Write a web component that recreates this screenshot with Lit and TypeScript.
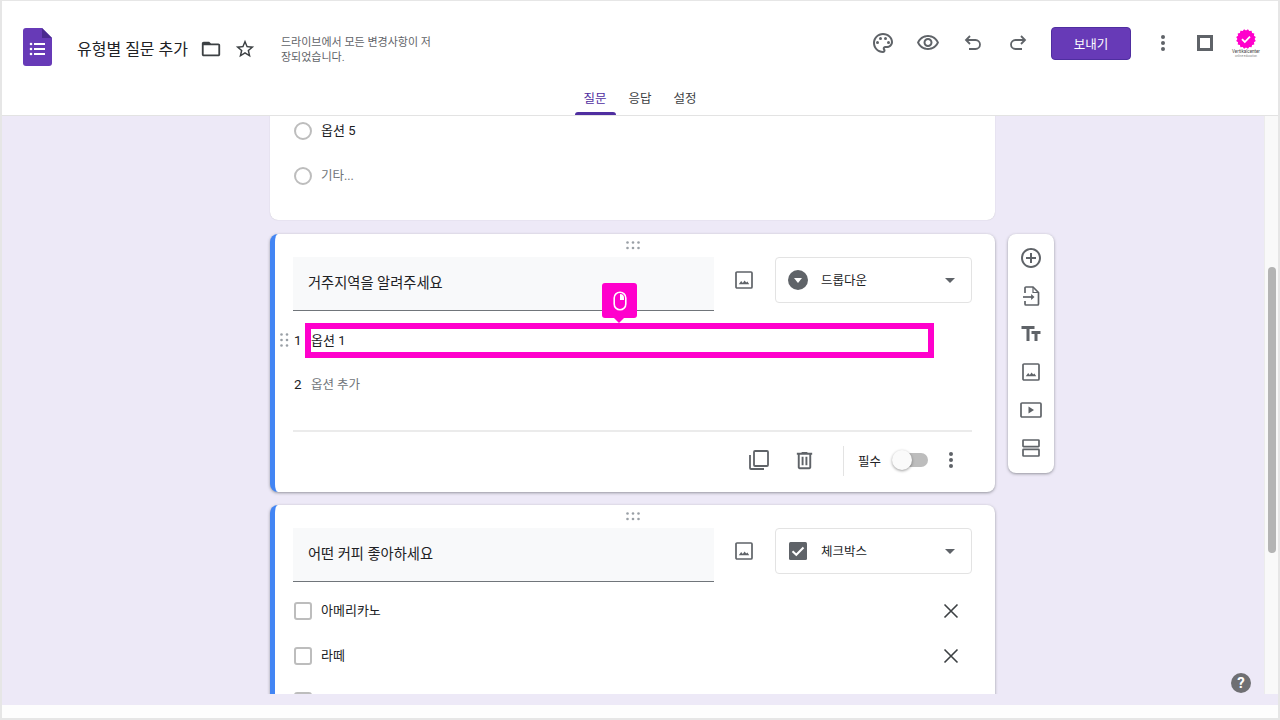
import { html, svg, css, LitElement } from "lit";
import { customElement } from "lit/decorators.js";

const GREY = "#5f6368";

const glyph = (d: string, size = 24, color = GREY) => html`
  <svg width=${size} height=${size} viewBox="0 0 24 24" fill=${color}><path d=${d}></path></svg>
`;

const P = {
  folder: "M20 6h-8l-2-2H4c-1.1 0-1.99.9-1.99 2L2 18c0 1.1.9 2 2 2h16c1.1 0 2-.9 2-2V8c0-1.1-.9-2-2-2zm0 12H4V8h16v10z",
  star: "M22 9.24l-7.19-.62L12 2 9.19 8.63 2 9.24l5.46 4.73L5.82 21 12 17.27 18.18 21l-1.63-7.03L22 9.24zM12 15.4l-3.76 2.27 1-4.28-3.32-2.88 4.38-.38L12 6.1l1.71 4.04 4.38.38-3.32 2.88 1 4.28L12 15.4z",
  eye: "M12 6c3.79 0 7.17 2.13 8.82 5.5C19.17 14.87 15.79 17 12 17s-7.17-2.13-8.82-5.5C4.83 8.13 8.21 6 12 6m0-2C7 4 2.73 7.11 1 11.5 2.73 15.89 7 19 12 19s9.27-3.11 11-7.5C21.27 7.11 17 4 12 4zm0 5c1.38 0 2.5 1.12 2.5 2.5S13.38 14 12 14s-2.5-1.12-2.5-2.5S10.62 9 12 9m0-2c-2.48 0-4.5 2.02-4.5 4.5S9.52 16 12 16s4.5-2.02 4.5-4.5S14.48 7 12 7z",
  add: "M13 7h-2v4H7v2h4v4h2v-4h4v-2h-4V7zm-1-5C6.48 2 2 6.48 2 12s4.48 10 10 10 10-4.48 10-10S17.52 2 12 2zm0 18c-4.41 0-8-3.59-8-8s3.59-8 8-8 8 3.59 8 8-3.59 8-8 8z",
  title: "M2.5 4v3h5v12h3V7h5V4h-13zm19 5h-9v3h3v7h3v-7h3V9z",
  trash: "M15 4V3H9v1H4v2h1v13c0 1.1.9 2 2 2h10c1.1 0 2-.9 2-2V6h1V4h-5zm2 15H7V6h10v13zM9 8h2v9H9zm4 0h2v9h-2z",
};

const palette = html`
  <svg width="24" height="24" viewBox="0 0 24 24" fill=${GREY}>
    <path d="M12 22C6.49 22 2 17.51 2 12S6.49 2 12 2s10 4.04 10 9c0 3.31-2.69 6-6 6h-1.77c-.28 0-.5.22-.5.5 0 .12.05.23.13.33.41.47.64 1.06.64 1.67 0 1.38-1.12 2.5-2.5 2.5zm0-18c-4.41 0-8 3.59-8 8s3.59 8 8 8c.28 0 .5-.22.5-.5 0-.16-.08-.28-.14-.35-.41-.46-.63-1.05-.63-1.65 0-1.38 1.12-2.5 2.5-2.5H16c2.21 0 4-1.79 4-4 0-3.86-3.59-7-8-7z"></path>
    <circle cx="6.5" cy="11.5" r="1.5"></circle>
    <circle cx="9.5" cy="7.5" r="1.5"></circle>
    <circle cx="14.5" cy="7.5" r="1.5"></circle>
    <circle cx="17.5" cy="11.5" r="1.5"></circle>
  </svg>
`;

const undo = html`
  <svg width="24" height="24" viewBox="0 0 24 24" fill="none" stroke=${GREY} stroke-width="1.8">
    <path d="M9 5L5 9l4 4"></path>
    <path d="M5 9h9.5a4.5 4.5 0 0 1 0 9H8"></path>
  </svg>
`;

const redo = html`
  <svg width="24" height="24" viewBox="0 0 24 24" fill="none" stroke=${GREY} stroke-width="1.8">
    <path d="M15 5l4 4-4 4"></path>
    <path d="M19 9H9.5a4.5 4.5 0 0 0 0 9H16"></path>
  </svg>
`;

const kebab = html`
  <svg width="24" height="24" viewBox="0 0 24 24" fill=${GREY}>
    <circle cx="12" cy="6" r="2"></circle>
    <circle cx="12" cy="12" r="2"></circle>
    <circle cx="12" cy="18" r="2"></circle>
  </svg>
`;

const picture = html`
  <svg width="18" height="18" viewBox="0 0 18 18" fill="none">
    <rect x="1" y="1" width="16" height="16" rx="1" stroke=${GREY} stroke-width="1.7"></rect>
    <path d="M3.8 13.2l2.4-3.2 1.6 2 1.8-2.6 1.6 2.2 1.2-1.2 1.8 2.8z" fill=${GREY}></path>
  </svg>
`;

const importFile = html`
  <svg width="22" height="22" viewBox="0 0 22 22" fill="none" stroke=${GREY} stroke-width="1.7">
    <path d="M5 8V3a1 1 0 0 1 1-1h7l5.5 5.5V19a1 1 0 0 1-1 1H6a1 1 0 0 1-1-1v-3"></path>
    <path d="M13 2v5.5h5.5" stroke-width="1.2"></path>
    <path d="M3 12h10"></path>
    <path d="M14.5 12l-3.4-2.9v5.8z" fill=${GREY} stroke="none"></path>
  </svg>
`;

const video = html`
  <svg width="22" height="16" viewBox="0 0 22 16" fill="none">
    <rect x="1" y="1" width="20" height="14" rx="1" stroke=${GREY} stroke-width="1.7"></rect>
    <path d="M8.5 4.5v7l5.5-3.5z" fill=${GREY}></path>
  </svg>
`;

const section = html`
  <svg width="20" height="20" viewBox="0 0 20 20" fill="none" stroke=${GREY} stroke-width="1.7">
    <rect x="2" y="2" width="16" height="6.6" rx=".6"></rect>
    <rect x="2" y="11.4" width="16" height="6.6" rx=".6"></rect>
  </svg>
`;

const copy = html`
  <svg width="22" height="22" viewBox="0 0 22 22" fill="none" stroke=${GREY} stroke-width="1.8">
    <rect x="6" y="2" width="14" height="15" rx="1"></rect>
    <path d="M2 6v13a1 1 0 0 0 1 1h13"></path>
  </svg>
`;

const cross = html`
  <svg width="18" height="18" viewBox="0 0 18 18" fill="none" stroke="#3c4043" stroke-width="1.6">
    <path d="M2.5 2.5l13 13M15.5 2.5l-13 13"></path>
  </svg>
`;

const dotGrid = (cols: number, rows: number) => {
  const dots = [];
  for (let y = 0; y < rows; y++) {
    for (let x = 0; x < cols; x++) {
      dots.push(svg`<circle cx=${1.5 + x * 5.5} cy=${1.5 + y * 5.5} r="1.3"></circle>`);
    }
  }
  return html`
    <svg width=${3 + (cols - 1) * 5.5} height=${3 + (rows - 1) * 5.5} fill="#9aa0a6">${dots}</svg>
  `;
};

const badgePoints = () => {
  const pts: string[] = [];
  for (let i = 0; i < 32; i++) {
    const r = i % 2 ? 10 : 8.6;
    const a = (i / 32) * Math.PI * 2;
    pts.push(`${10 + r * Math.cos(a)},${10 + r * Math.sin(a)}`);
  }
  return pts.join(" ");
};

@customElement("app-root")
export class AppRoot extends LitElement {
  static styles = css`
    :host {
      display: block;
      font-family: Roboto, "Noto Sans CJK KR", sans-serif;
      color: #202124;
    }
    svg {
      display: block;
    }
    .frame {
      box-sizing: border-box;
      height: 720px;
      display: flex;
      flex-flow: column;
      border: solid #e6e6e6;
      border-width: 1px 2px 2px 2px;
      background: #fff;
    }

    .header {
      flex: none;
      height: 115px;
      box-sizing: border-box;
      border-bottom: 1px solid #e3e3e3;
    }
    .top {
      height: 84px;
      display: flex;
      align-items: center;
    }
    .left {
      display: flex;
      align-items: center;
      padding: 8px 0 0 21px;
    }
    .doc-name {
      font-size: 16px;
      margin: 2px 12px 0 25px;
      white-space: nowrap;
    }
    .left .folder {
      margin-top: 4px;
    }
    .left .star {
      margin: 4px 0 0 12px;
    }
    .saved {
      width: 155px;
      margin-left: 25px;
      padding-top: 6px;
      font-size: 11px;
      line-height: 15px;
      color: #5f6368;
      word-break: break-all;
    }
    .right {
      margin-left: auto;
      padding-right: 11px;
      display: flex;
      align-items: center;
    }
    .act {
      width: 45px;
      display: flex;
      justify-content: center;
    }
    .send {
      box-sizing: border-box;
      width: 80px;
      height: 33px;
      margin: 0 9px 0 11px;
      border: 1px solid #4f2ea0;
      border-radius: 4px;
      background: #673ab7;
      color: #fff;
      font: inherit;
      font-size: 12.5px;
    }
    .square {
      width: 40px;
      display: flex;
      justify-content: center;
    }
    .square i {
      display: block;
      box-sizing: border-box;
      width: 16px;
      height: 16px;
      border: 3px solid #5f6368;
    }
    .avatar {
      width: 42px;
      display: flex;
      flex-flow: column;
      align-items: center;
      padding-top: 1px;
    }
    .avatar b {
      font-weight: 400;
      font-size: 4.5px;
      line-height: 5px;
      color: #444;
      white-space: nowrap;
    }
    .avatar small {
      font-size: 3px;
      line-height: 4px;
      color: #888;
      white-space: nowrap;
    }

    .tabs {
      height: 30px;
      display: flex;
      justify-content: center;
      gap: 4px;
    }
    .tab {
      width: 41px;
      padding-top: 2px;
      box-sizing: border-box;
      display: flex;
      flex-flow: column;
      align-items: center;
      justify-content: space-between;
      font-size: 12.5px;
      line-height: 24px;
      color: #3c4043;
    }
    .tab.on {
      color: #4f2ea0;
    }
    .tab u {
      display: block;
      width: 100%;
      height: 3px;
      border-radius: 3px 3px 0 0;
    }
    .tab.on u {
      background: #4f2ea0;
    }

    .main {
      flex: 1;
      min-height: 0;
      display: flex;
    }
    .content {
      flex: 1;
      min-width: 0;
      position: relative;
      overflow: hidden;
      background: #ede9f7;
      padding-left: 268px;
      display: grid;
      grid-template-columns: 725px 46px;
      column-gap: 13px;
      align-items: start;
    }
    .track {
      flex: none;
      width: 14px;
      box-sizing: border-box;
      border-left: 1px solid #ececec;
      background: #f9f9f9;
      padding: 151px 2px 0 3px;
    }
    .thumb {
      height: 286px;
      border-radius: 4px;
      background: #b4b4b4;
    }
    .band {
      flex: none;
      height: 11px;
      background: #ede9f7;
    }
    .foot {
      flex: none;
      height: 13px;
      background: #fdfdfd;
    }

    .cards {
      display: flex;
      flex-flow: column;
      margin-top: -8px;
    }
    .card {
      position: relative;
      flex: none;
      box-sizing: border-box;
      background: #fff;
      border-radius: 8px;
      box-shadow: 0 0 1px rgba(0, 0, 0, 0.25);
    }
    .card.plain {
      height: 112px;
      padding: 0 24px;
    }
    .card.active {
      border-left: 5px solid #4285f4;
      box-shadow: 0 1px 3px rgba(60, 64, 67, 0.5);
      padding: 0 23px 0 18px;
    }
    .card.second {
      height: 258px;
      margin-top: 14px;
    }
    .card.third {
      margin-top: 13px;
      height: 300px;
    }
    .handle {
      height: 23px;
      display: flex;
      align-items: center;
      justify-content: center;
    }
    .head {
      display: flex;
      align-items: flex-start;
    }
    .question {
      box-sizing: border-box;
      width: 421px;
      height: 54px;
      padding: 0 0 5px 15px;
      display: flex;
      align-items: center;
      background: #f8f9fa;
      border-bottom: 1px solid #70757a;
      font-size: 14.25px;
    }
    .pic {
      box-sizing: border-box;
      width: 61px;
      height: 46px;
      padding-right: 2px;
      display: flex;
      align-items: center;
      justify-content: center;
    }
    .select {
      box-sizing: border-box;
      width: 197px;
      height: 46px;
      padding: 0 16px 0 12px;
      display: flex;
      align-items: center;
      border: 1px solid #e3e3e3;
      border-radius: 4px;
      font-size: 12.5px;
    }
    .select span {
      flex: 1;
      margin-left: 13px;
      padding-bottom: 2px;
    }
    .caret {
      width: 0;
      height: 0;
      border: 5px solid transparent;
      border-top-color: #5f6368;
      border-bottom-width: 0;
    }
    .round-select {
      width: 20px;
      height: 20px;
      border-radius: 50%;
      background: #5f6368;
      display: flex;
      align-items: center;
      justify-content: center;
    }
    .round-select i {
      width: 0;
      height: 0;
      border: 4.5px solid transparent;
      border-top: 5px solid #fff;
      border-bottom-width: 0;
    }

    .option {
      height: 45px;
      display: flex;
      align-items: center;
      font-size: 13px;
    }
    .lbl {
      padding-bottom: 2px;
    }
    .mark {
      flex: none;
      box-sizing: border-box;
      width: 18px;
      height: 18px;
      margin-right: 9px;
      border: 2px solid #bdbdbd;
    }
    .mark.radio {
      border-radius: 50%;
    }
    .mark.box {
      border-radius: 3px;
    }
    .muted {
      color: #70757a;
      font-size: 12.5px;
    }
    .option .remove {
      margin-left: auto;
      width: 42px;
      display: flex;
      justify-content: center;
    }
    .choices {
      padding: 6px 0 0 1px;
    }

    .numbered {
      height: 44px;
      margin-left: -14px;
      display: flex;
      align-items: center;
      font-size: 13px;
    }
    .numbered .grip {
      box-sizing: border-box;
      width: 14px;
      padding-left: 1px;
    }
    .numbered .num {
      width: 18px;
      padding-left: 1px;
      box-sizing: border-box;
      font-size: 13.5px;
    }
    .list {
      padding-top: 7px;
    }
    .rule {
      height: 2px;
      margin-top: 24px;
      background: #ebebeb;
    }
    .tools {
      height: 56px;
      display: flex;
      align-items: center;
      justify-content: flex-end;
    }
    .tool {
      width: 46px;
      display: flex;
      justify-content: center;
    }
    .sep {
      width: 1px;
      height: 30px;
      margin: 2px 14px 0 15px;
      background: #e3e3e3;
    }
    .required {
      font-size: 12.5px;
      margin-right: 11px;
    }
    .switch {
      position: relative;
      width: 36px;
      height: 14px;
      display: flex;
      justify-content: flex-end;
    }
    .switch::before {
      content: "";
      width: 28px;
      border-radius: 7px;
      background: #bdbdbd;
    }
    .switch i {
      position: absolute;
      left: 0;
      top: -3px;
      width: 20px;
      height: 20px;
      border-radius: 50%;
      background: #fafafa;
      box-shadow: 0 1px 3px rgba(0, 0, 0, 0.4);
    }
    .more {
      width: 42px;
      margin-left: 2px;
      display: flex;
      justify-content: center;
    }

    .highlight {
      position: absolute;
      left: 30px;
      top: 89px;
      box-sizing: border-box;
      width: 629px;
      height: 35px;
      border: 6px solid #ff00cc;
    }
    .pointer {
      position: absolute;
      left: 327px;
      top: 49px;
      width: 35px;
      height: 35px;
      border-radius: 3px;
      background: #ff00cc;
      display: flex;
      align-items: center;
      justify-content: center;
    }
    .pointer::after {
      content: "";
      position: absolute;
      left: 12px;
      bottom: -5px;
      border: 5px solid transparent;
      border-top-color: #ff00cc;
      border-bottom-width: 0;
    }

    .toolbar {
      margin-top: 118px;
      box-sizing: border-box;
      height: 239px;
      padding: 5px 0 6px;
      background: #fff;
      border-radius: 8px;
      box-shadow: 0 1px 3px rgba(60, 64, 67, 0.5);
      display: flex;
      flex-flow: column;
    }
    .toolbar div {
      height: 38px;
      display: flex;
      align-items: center;
      justify-content: center;
    }

    .help {
      position: absolute;
      right: 13px;
      bottom: 1px;
      width: 20px;
      height: 20px;
      border-radius: 50%;
      background: #6f6f73;
      color: #fff;
      font-size: 15px;
      font-weight: 700;
      line-height: 20px;
      text-align: center;
    }
  `;

  render() {
    return html`
      <div class="frame">
        <header class="header">
          <div class="top">
            <div class="left">
              <svg width="29" height="38" viewBox="0 0 29 38">
                <path d="M3 0h16l10 10v25a3 3 0 0 1-3 3H3a3 3 0 0 1-3-3V3a3 3 0 0 1 3-3z" fill="#673ab7"></path>
                <path d="M19 0l10 10H19z" fill="#4a2a8f"></path>
                <g fill="#fff">
                  <circle cx="8" cy="16" r="1.3"></circle>
                  <circle cx="8" cy="21" r="1.3"></circle>
                  <circle cx="8" cy="26" r="1.3"></circle>
                  <rect x="11" y="15" width="11" height="2"></rect>
                  <rect x="11" y="20" width="11" height="2"></rect>
                  <rect x="11" y="25" width="11" height="2"></rect>
                </g>
              </svg>
              <div class="doc-name">유형별 질문 추가</div>
              <div class="folder">${glyph(P.folder, 22, "#3c4043")}</div>
              <div class="star">${glyph(P.star, 22, "#3c4043")}</div>
              <div class="saved">드라이브에서 모든 변경사항이 저장되었습니다.</div>
            </div>
            <div class="right">
              <div class="act">${palette}</div>
              <div class="act">${glyph(P.eye)}</div>
              <div class="act">${undo}</div>
              <div class="act">${redo}</div>
              <button class="send">보내기</button>
              <div class="act">${kebab}</div>
              <div class="square"><i></i></div>
              <div class="avatar">
                <svg width="20" height="20" viewBox="0 0 20 20">
                  <polygon points=${badgePoints()} fill="#ff00cc"></polygon>
                  <path d="M6 10.2l2.8 2.8L14 7.6" fill="none" stroke="#fff" stroke-width="1.8"></path>
                </svg>
                <b>Vertikalcenter</b>
                <small>online education</small>
              </div>
            </div>
          </div>
          <nav class="tabs">
            <div class="tab on">질문<u></u></div>
            <div class="tab">응답<u></u></div>
            <div class="tab">설정<u></u></div>
          </nav>
        </header>

        <div class="main">
          <div class="content">
            <div class="cards">
              <section class="card plain">
                <div class="option"><span class="mark radio"></span><span class="lbl">옵션 5</span></div>
                <div class="option muted"><span class="mark radio"></span><span class="lbl">기타...</span></div>
              </section>

              <section class="card active second">
                <div class="handle">${dotGrid(3, 2)}</div>
                <div class="head">
                  <div class="question">거주지역을 알려주세요</div>
                  <div class="pic">${picture}</div>
                  <div class="select">
                    <div class="round-select"><i></i></div>
                    <span>드롭다운</span>
                    <div class="caret"></div>
                  </div>
                </div>
                <div class="list">
                  <div class="numbered">
                    <div class="grip">${dotGrid(2, 3)}</div>
                    <div class="num">1</div>
                    <div class="lbl">옵션 1</div>
                  </div>
                  <div class="numbered">
                    <div class="grip"></div>
                    <div class="num">2</div>
                    <div class="lbl muted">옵션 추가</div>
                  </div>
                </div>
                <div class="rule"></div>
                <div class="tools">
                  <div class="tool">${copy}</div>
                  <div class="tool">${glyph(P.trash, 23)}</div>
                  <div class="sep"></div>
                  <div class="required">필수</div>
                  <div class="switch"><i></i></div>
                  <div class="more">${kebab}</div>
                </div>
                <div class="highlight"></div>
                <div class="pointer">
                  <svg width="14" height="20" viewBox="0 0 14 20" fill="none">
                    <rect x="1.2" y="1.2" width="11.6" height="17.6" rx="5.8" stroke="#fff" stroke-width="1.6"></rect>
                    <path d="M7 3a4 4 0 0 1 4 4v2H7z" fill="#fff"></path>
                  </svg>
                </div>
              </section>

              <section class="card active third">
                <div class="handle">${dotGrid(3, 2)}</div>
                <div class="head">
                  <div class="question">어떤 커피 좋아하세요</div>
                  <div class="pic">${picture}</div>
                  <div class="select">
                    <svg width="20" height="20" viewBox="0 0 20 20">
                      <rect x="1" y="1" width="18" height="18" rx="1.5" fill=${GREY}></rect>
                      <path d="M4.5 10.2l3.8 3.6L15.5 6.5" fill="none" stroke="#fff" stroke-width="2"></path>
                    </svg>
                    <span>체크박스</span>
                    <div class="caret"></div>
                  </div>
                </div>
                <div class="choices">
                  <div class="option">
                    <span class="mark box"></span><span class="lbl">아메리카노</span>
                    <div class="remove">${cross}</div>
                  </div>
                  <div class="option">
                    <span class="mark box"></span><span class="lbl">라떼</span>
                    <div class="remove">${cross}</div>
                  </div>
                  <div class="option"><span class="mark box"></span></div>
                </div>
              </section>
            </div>

            <aside class="toolbar">
              <div>${glyph(P.add)}</div>
              <div>${importFile}</div>
              <div>${glyph(P.title)}</div>
              <div>${picture}</div>
              <div>${video}</div>
              <div>${section}</div>
            </aside>

            <div class="help">?</div>
          </div>
          <div class="track"><div class="thumb"></div></div>
        </div>
        <div class="band"></div>
        <div class="foot"></div>
      </div>
    `;
  }
}
